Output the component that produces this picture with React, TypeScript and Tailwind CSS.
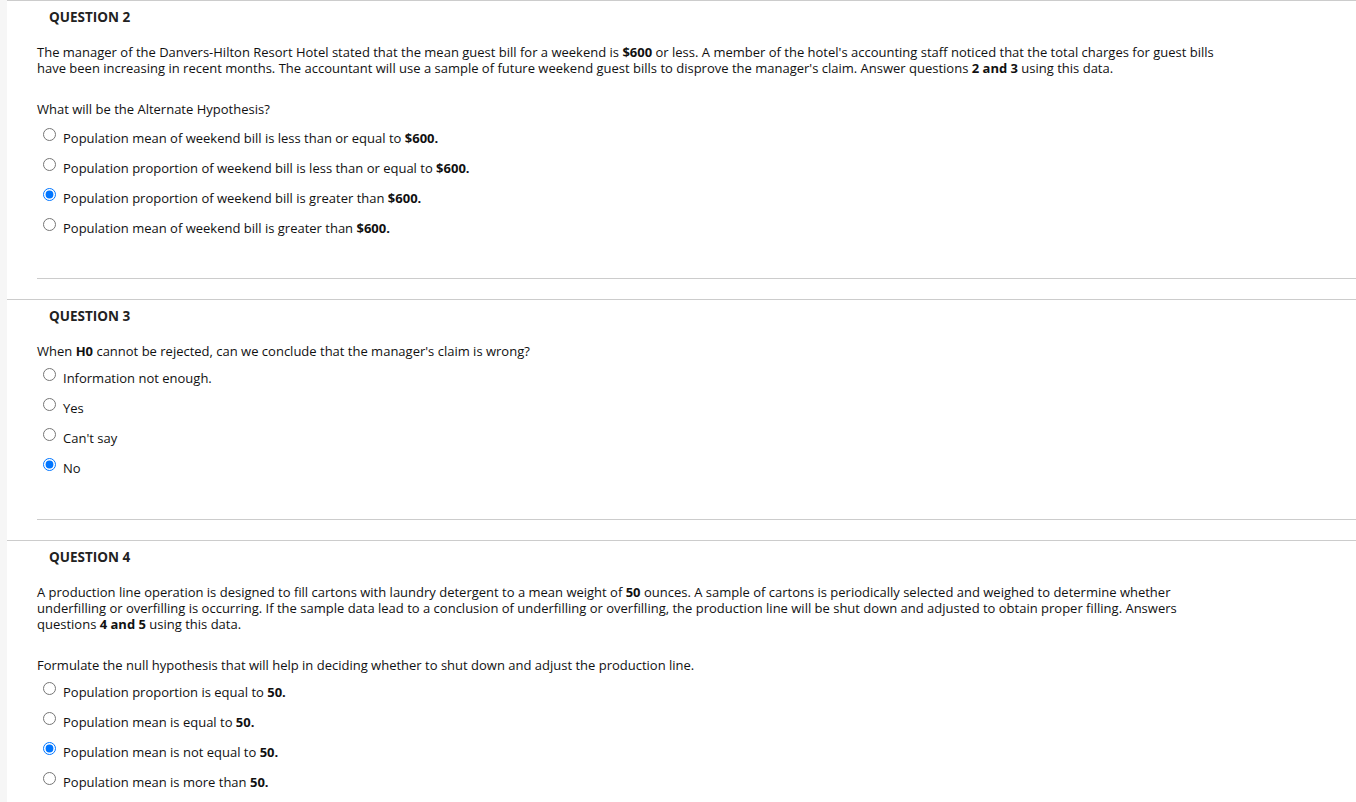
import React from "react";

interface Choice {
  label: React.ReactNode;
  checked?: boolean;
}

interface Question {
  id: number;
  intro?: React.ReactNode;
  prompt: React.ReactNode;
  choices: Choice[];
}

const questions: Question[] = [
  {
    id: 2,
    intro: (
      <>
        The manager of the Danvers-Hilton Resort Hotel stated that the mean guest bill for a weekend is <b>$600</b> or
        less. A member of the hotel's accounting staff noticed that the total charges for guest bills have been
        increasing in recent months. The accountant will use a sample of future weekend guest bills to disprove the
        manager's claim. Answer questions <b>2 and 3</b> using this data.
      </>
    ),
    prompt: "What will be the Alternate Hypothesis?",
    choices: [
      { label: <>Population mean of weekend bill is less than or equal to <b>$600.</b></> },
      { label: <>Population proportion of weekend bill is less than or equal to <b>$600.</b></> },
      { label: <>Population proportion of weekend bill is greater than <b>$600.</b></>, checked: true },
      { label: <>Population mean of weekend bill is greater than <b>$600.</b></> },
    ],
  },
  {
    id: 3,
    prompt: (
      <>
        When <b>H0</b> cannot be rejected, can we conclude that the manager's claim is wrong?
      </>
    ),
    choices: [
      { label: "Information not enough." },
      { label: "Yes" },
      { label: "Can't say" },
      { label: "No", checked: true },
    ],
  },
  {
    id: 4,
    intro: (
      <>
        A production line operation is designed to fill cartons with laundry detergent to a mean weight of <b>50</b>{" "}
        ounces. A sample of cartons is periodically selected and weighed to determine whether underfilling or
        overfilling is occurring. If the sample data lead to a conclusion of underfilling or overfilling, the
        production line will be shut down and adjusted to obtain proper filling. Answers questions <b>4 and 5</b> using
        this data.
      </>
    ),
    prompt: "Formulate the null hypothesis that will help in deciding whether to shut down and adjust the production line.",
    choices: [
      { label: <>Population proportion is equal to <b>50.</b></> },
      { label: <>Population mean is equal to <b>50.</b></> },
      { label: <>Population mean is not equal to <b>50.</b></>, checked: true },
      { label: <>Population mean is more than <b>50.</b></> },
    ],
  },
];

const QuestionBlock: React.FC<{ q: Question }> = ({ q }) => (
  <section className="border-t border-[#cccccc]">
    <h3 className="pt-[8px] pl-[42px] text-[13.5px] leading-[16px] font-bold text-[#222]">QUESTION {q.id}</h3>
    <div className="pl-[30px]">
      {q.intro && <p className="mt-[19px] w-[1190px] leading-[16px]">{q.intro}</p>}
      <p className={`${q.intro ? "mt-[25px]" : "mt-[19px]"} leading-[16px]`}>{q.prompt}</p>
      <div className={`${q.id === 2 ? "mt-[13px]" : "mt-[11px]"} flex flex-col gap-[14px]`}>
        {q.choices.map((c, i) => (
          <label key={i} className="flex items-start h-[16px] pl-[6px]">
            <input
              type="radio"
              name={`q${q.id}`}
              defaultChecked={c.checked}
              className="m-0 mt-[-2px] w-[13px] h-[13px] shrink-0"
            />
            <span className="ml-[7px] leading-[16px]">{c.label}</span>
          </label>
        ))}
      </div>
      <div className={`${q.id === 2 ? "mt-[42px]" : "mt-[43px]"} border-t border-[#cccccc]`} />
      <div className="h-[20px]" />
    </div>
  </section>
);

export default function App() {
  return (
    <div className="flex min-h-[802px] bg-white text-[13px] text-[#111]" style={{ fontFamily: '"Open Sans", "Liberation Sans", sans-serif' }}>
      <div className="w-[7px] shrink-0 bg-[#f6f6f6]" />
      <main className="flex-1">
        {questions.map((q) => (
          <QuestionBlock key={q.id} q={q} />
        ))}
      </main>
    </div>
  );
}
